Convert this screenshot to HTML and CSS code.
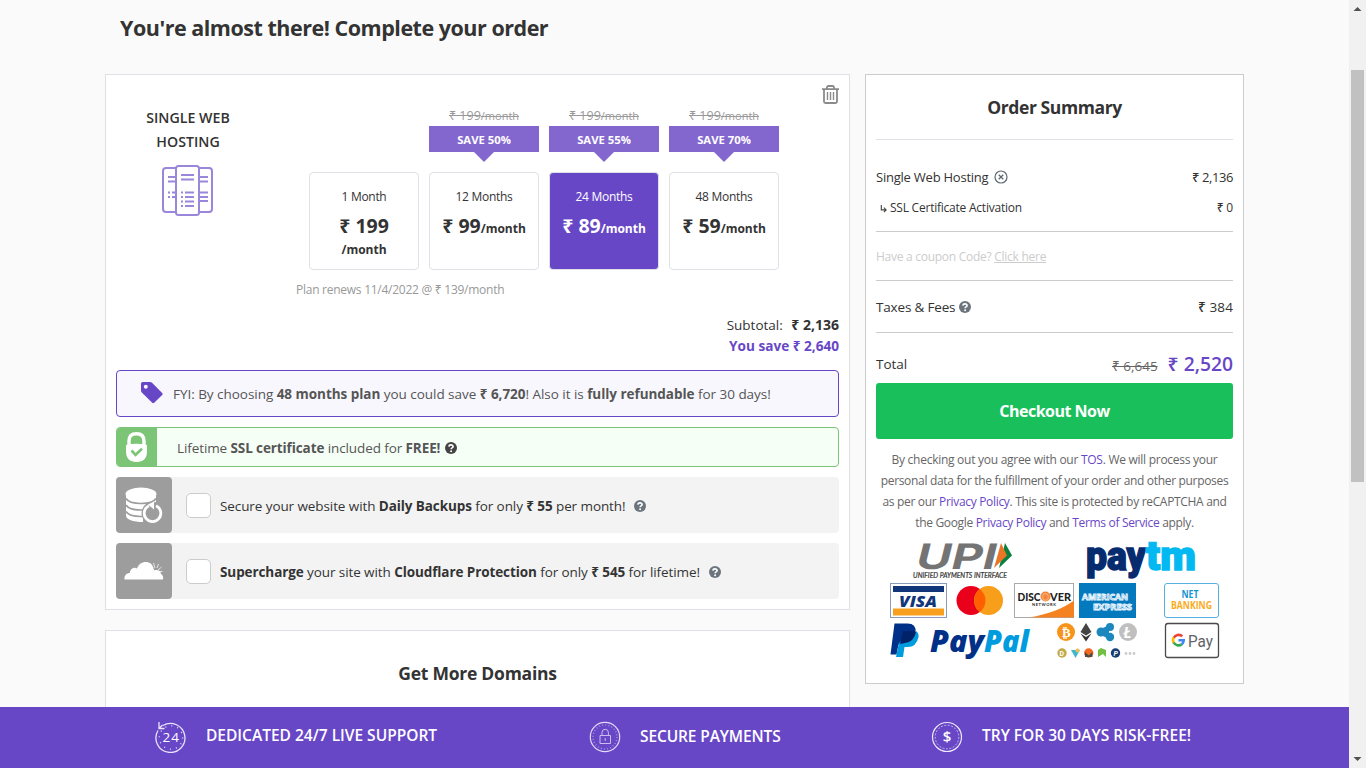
FILE: index.html
```html
<!DOCTYPE html>
<html lang="en">
<head>
<meta charset="utf-8">
<title>Complete your order</title>
<link rel="stylesheet" href="styles.css">
</head>
<body>
<svg class="defs" width="0" height="0">
  <symbol id="help" viewBox="0 0 12 12"><circle cx="6" cy="6" r="6" fill="currentColor"/><path d="M3.900 4.600C4.100 2.300 8.200 2.300 8.100 4.600 8 6 6.100 5.900 6.100 7.200" fill="none" stroke="#fff" stroke-width="1.600"/><circle cx="6.100" cy="9.200" r="1" fill="#fff"/></symbol>
</svg>
<div class="window">
  <div class="page">
    <main class="content">
      <h1 class="headline">You're almost there! Complete your order</h1>
      <div class="columns">
        <div class="left">
          <section class="card order">
            <svg class="trash" viewBox="0 0 17 19" fill="none" stroke="#8b8b8b" stroke-width="1.800"><path d="M0 4.200h17M5 4V2.500Q5 1 6.500 1h4Q12 1 12 2.500V4M2 4.500V16.500Q2 18 3.500 18h10Q15 18 15 16.500V4.500"/><path d="M5.500 7v8M8.500 7v8M11.500 7v8" stroke-width="1.400"/></svg>
            <div class="product">
              <div class="product-name"><div>SINGLE WEB</div><div>HOSTING</div>
                <svg class="servers" viewBox="0 0 51 51" fill="none" stroke="#9a86da" stroke-width="2"><path d="M14 3H4Q1 3 1 6v38q0 3 3 3h10M37 3h10q3 0 3 3v38q0 3-3 3H37"/><rect x="14" y="1" width="23" height="49" rx="2.500"/><path d="M6 12h7M6 16.500h7M38 12h8M38 16.500h8M19 10h13M19 14.500h13M10 27.500h3M10 32h3M6 27.500h2M6 32h2M38 27.500h8M38 32h8M38 36h8M19 27.500h2M23 27.500h9M19 32h2M23 32h9M19 36.500h2M23 36.500h9M19 41h2M23 41h9"/></svg>
              </div>
              <div class="plans">
                <div class="plan"><div class="was"></div><div class="gap"></div><div class="box"><div class="term">1 Month</div><div class="price">₹ 199<br><small>/month</small></div></div></div>
                <div class="plan"><div class="was"><s>₹ 199<small>/month</small></s></div><div class="save">SAVE 50%</div><div class="box"><div class="term">12 Months</div><div class="price">₹ 99<small>/month</small></div></div></div>
                <div class="plan"><div class="was"><s>₹ 199<small>/month</small></s></div><div class="save">SAVE 55%</div><div class="box on"><div class="term">24 Months</div><div class="price">₹ 89<small>/month</small></div></div></div>
                <div class="plan"><div class="was"><s>₹ 199<small>/month</small></s></div><div class="save">SAVE 70%</div><div class="box"><div class="term">48 Months</div><div class="price">₹ 59<small>/month</small></div></div></div>
              </div>
            </div>
            <div class="renews">Plan renews 11/4/2022 @ ₹ 139/month</div>
            <div class="subtotal"><span>Subtotal:</span> <b>₹ 2,136</b></div>
            <div class="yousave">You save ₹ 2,640</div>
            <div class="note fyi"><svg class="tag" viewBox="0 0 22 22"><path d="M0 1.500Q0 0 1.500 0H9q1.200 0 2 .8L21.200 11q.9 1 0 2l-8 7.800q-1 .9-2 0L.8 10.600Q0 9.800 0 8.600z" fill="#6847c7"/><circle cx="4.800" cy="4.800" r="2" fill="#f8f7fe"/></svg><span>FYI: By choosing <b>48 months plan</b> you could save <b>₹ 6,720</b>! Also it is <b>fully refundable</b> for 30 days!</span></div>
            <div class="note ssl"><div class="ssl-icon"><svg width="21" height="31" viewBox="0 0 21 31"><path d="M3 15V9Q3 1.700 10.500 1.700T18 9v6" fill="none" stroke="#fff" stroke-width="3.400"/><path d="M0 13q10.500-2.500 21 0v6q0 11-10.500 11T0 19z" fill="#fff"/><path d="m5.500 18.500 4 4.300 6.500-6" fill="none" stroke="#7cc576" stroke-width="2.600"/></svg></div><span>Lifetime <b>SSL certificate</b> included for <b>FREE!</b></span><svg class="help dark"><use href="#help"/></svg></div>
            <div class="addon"><div class="addon-icon"><svg width="38" height="36" viewBox="0 0 38 36"><path d="M1 7.500v21c0 4 7 6.500 17 6.500V23l13-8V7.500z" fill="#fff"/><path d="M1 11.500q3 5 15 5t15-5M1 18q3 5 15 5h4M1 24.500q3 5 15 5h4" fill="none" stroke="#9d9d9d" stroke-width="1.700"/><ellipse cx="16" cy="7" rx="15.500" ry="6.500" fill="#fff"/><circle cx="27.500" cy="26" r="11" fill="#9d9d9d"/><path d="M24 18.700a8.300 8.300 0 1 0 7 0" fill="none" stroke="#fff" stroke-width="2.800"/><path d="m23 17.500 6-3v8z" fill="#fff"/></svg></div><i class="check"></i><span>Secure your website with <b>Daily Backups</b> for only <b>₹ 55</b> per month!</span><svg class="help slate"><use href="#help"/></svg></div>
            <div class="addon"><div class="addon-icon"><svg width="40" height="20" viewBox="0 0 40 20"><path d="M31 7 29.500 2M33 7l1.500-4M34 9l3.500-3M35 10.500h3.500" stroke="#e6e6e6" stroke-width="1"/><path d="M.5 18.500C0 14 3 12 6 12c0-4 4-6.500 7-4.500C15 2 20 0 24.500 1.500c3.500 1 5 4 5.500 8 4-1.500 7 .5 7 3.500 2 1 2.500 3 2 5.500z" fill="#fff"/></svg></div><i class="check"></i><span><b>Supercharge</b> your site with <b>Cloudflare Protection</b> for only <b>₹ 545</b> for lifetime!</span><svg class="help slate"><use href="#help"/></svg></div>
          </section>
          <section class="card domains"><h2>Get More Domains</h2></section>
        </div>
        <aside class="card summary">
          <h2>Order Summary</h2>
          <div class="row item"><span>Single Web Hosting</span><svg class="remove" viewBox="0 0 14 14" fill="none" stroke="#5d6873"><circle cx="7" cy="7" r="6" stroke-width="1.200"/><path d="m4.700 4.700 4.600 4.600m0-4.600L4.700 9.300" stroke-width="1.300"/></svg><span class="amount">₹ 2,136</span></div>
          <div class="row sub"><svg class="hook" viewBox="0 0 8 9" fill="none" stroke="#444" stroke-width="1.300"><path d="M1.500 0v5.500H6M4.500 3 7 5.500 4.500 8"/></svg><span>SSL Certificate Activation</span><span class="amount">₹ 0</span></div>
          <div class="row coupon"><span>Have a coupon Code? <u>Click here</u></span></div>
          <div class="row taxes"><span>Taxes &amp; Fees</span><svg class="help slate"><use href="#help"/></svg><span class="amount">₹ 384</span></div>
          <div class="row total"><span>Total</span><s>₹ 6,645</s><strong>₹ 2,520</strong></div>
          <div class="checkout">Checkout Now</div>
          <p class="legal"><span class="loose">By checking out you agree with our <a>TOS</a>. We will process your</span><br>personal data for the fulfillment of your order and other purposes<br>as per our <a>Privacy Policy</a>. This site is protected by reCAPTCHA and<br>the Google <a>Privacy Policy</a> and <a>Terms of Service</a> apply.</p>
          <svg class="pay" viewBox="876 540 357 122">
            <text transform="translate(914 569) skewX(-14)" font-family="Inter" font-weight="700" font-size="35" fill="#747474" textLength="80" lengthAdjust="spacingAndGlyphs">UPI</text><text x="913" y="577.500" font-family="Lato" font-weight="400" font-style="italic" font-size="7.200" fill="#333" stroke="#333" stroke-width=".2" textLength="94" lengthAdjust="spacingAndGlyphs">UNIFIED PAYMENTS INTERFACE</text>
            <path d="m1005 543 7 12.500-13 12.500z" fill="#098041"/><path d="m1001 543 6 12.500-13 12.500z" fill="#e97626"/>
            <g transform="translate(0 570) scale(1 .93)" font-family="Roboto" font-weight="900" font-size="43" stroke-width="1.500"><text x="1086" fill="#062b6f" stroke="#062b6f" textLength="60" lengthAdjust="spacingAndGlyphs">pay</text><text x="1146" fill="#04b9f1" stroke="#04b9f1" textLength="50" lengthAdjust="spacingAndGlyphs">tm</text></g>
            <rect x="890.500" y="583.500" width="56" height="34" fill="#fff" stroke="#8a9cba"/><path fill="#113679" d="M893 586h51v6h-51z"/><path fill="#f8a01e" d="M893 608.500h51v7h-51z"/><text x="899" y="606.500" font-family="Open Sans" font-style="italic" font-weight="800" font-size="16.500" fill="#113679" textLength="38" lengthAdjust="spacingAndGlyphs">VISA</text>
            <circle cx="971" cy="600.500" r="14.500" fill="#eb001b"/><circle cx="988.500" cy="600.500" r="14.500" fill="#f79e1b"/><path d="M979.800 589a14.500 14.500 0 0 1 0 23 14.500 14.500 0 0 1 0-23" fill="#ff5f00"/>
            <rect x="1014.500" y="583.500" width="59" height="34" fill="#fff" stroke="#aaa"/><path d="M1029 617.500q29-5 45-17v17z" fill="#f58220"/><circle cx="1045.500" cy="596.500" r="5" fill="#f4863a"/><g font-family="Lato" font-weight="900" fill="#222"><text x="1017.500" y="600.500" font-size="11.500" textLength="23" lengthAdjust="spacingAndGlyphs">DISC</text><text x="1041.500" y="600.500" font-size="11.500" fill="#f7a468" textLength="8" lengthAdjust="spacingAndGlyphs">O</text><text x="1050" y="600.500" font-size="11.500" textLength="21" lengthAdjust="spacingAndGlyphs">VER</text><text x="1032" y="605.500" font-size="4" font-weight="700" textLength="24">NETWORK</text></g>
            <path fill="#0479be" d="M1079 583h57v35h-57z"/><g font-family="Open Sans" font-weight="700" font-size="9.500" fill="#0479be" stroke="#e6f4ff" stroke-width="1"><text x="1082" y="599.500" textLength="46" lengthAdjust="spacingAndGlyphs">AMERICAN</text><text x="1093" y="609.500" textLength="39" lengthAdjust="spacingAndGlyphs">EXPRESS</text></g>
            <rect x="1164.500" y="583.500" width="54" height="34" rx="2.500" fill="#fff" stroke="#56b0e0"/><g font-family="Open Sans" font-weight="700" font-size="10"><text x="1181.500" y="598" fill="#1695d3" textLength="17" lengthAdjust="spacingAndGlyphs">NET</text><text x="1171" y="608.800" fill="#faab1c" textLength="41" lengthAdjust="spacingAndGlyphs">BANKING</text></g>
            <path d="M894.500 623.500h13q9 0 8 9-2 12-12 12h-5l-2 10h-6z" fill="#003087"/><path d="M916 631q3 2 2.500 6-2 10-11 10h-3l-1.500 10h-7l1-5 2-9q1-2 4-2 11 1 13-10" fill="#009cde"/><path d="M903 631h9q3 0 4 1-2 10-11 11l-5 1z" fill="#012169"/>
            <g font-family="Open Sans" font-style="italic" font-weight="800" font-size="29.500"><text x="930" y="652" fill="#003087" textLength="54" lengthAdjust="spacingAndGlyphs">Pay</text><text x="984" y="652" fill="#009cde" textLength="45" lengthAdjust="spacingAndGlyphs">Pal</text></g>
            <circle cx="1066" cy="632" r="9" fill="#f7931a"/><text x="1062" y="636.500" font-family="Roboto" font-weight="900" font-size="13" fill="#fff">₿</text>
            <path d="m1086 623 5.500 9-5.500 3.500-5.500-3.500z" fill="#444"/><path d="m1080.500 633.500 5.500 3.500 5.500-3.500-5.500 8z" fill="#333"/>
            <g fill="#1b87bd"><circle cx="1101" cy="632" r="4.500"/><circle cx="1110" cy="627" r="4"/><circle cx="1110" cy="637" r="4.200"/><path d="m1101 629 8-4v14l-8-4z"/></g>
            <circle cx="1128" cy="632" r="9" fill="#bfbfbf"/><text x="1123.500" y="637.500" font-family="Lato" font-style="italic" font-weight="900" font-size="15" fill="#fff">Ł</text>
            <circle cx="1062" cy="653" r="4.700" fill="#c3a949"/><text x="1059.500" y="655.500" font-family="Roboto" font-weight="700" font-size="7" fill="#fff">D</text><path d="M1071 650h9l-4.500 8z" fill="#3fb6d0"/><circle cx="1077.500" cy="650.500" r="2" fill="#f0bd4c"/><circle cx="1088.700" cy="653" r="4.700" fill="#f26722"/><path d="M1085 657v-5l3.700 3.500 3.700-3.500v5z" fill="#4c4c4c"/><path d="m1098 650 3-2 5 2v7l-3-3-5 3z" fill="#72bf44"/><circle cx="1115.500" cy="653" r="4.700" fill="#153e75"/><text x="1113.500" y="655.500" font-family="Roboto" font-style="italic" font-weight="700" font-size="7" fill="#fff">P</text><g fill="#ccc"><circle cx="1126" cy="653.500" r="1.400"/><circle cx="1130" cy="653.500" r="1.400"/><circle cx="1134" cy="653.500" r="1.400"/></g>
            <rect x="1165.500" y="623.500" width="53" height="34" rx="2.500" fill="#fff" stroke="#4a4a4a" stroke-width="1.300"/><g fill="none" stroke-width="2.600"><path d="M1182.300 636.300a5.500 5.500 0 0 0-8.600 1.700" stroke="#ea4335"/><path d="M1173.700 637.500a5.500 5.500 0 0 0 0 5.500" stroke="#fbbc05"/><path d="M1173.700 642.500a5.500 5.500 0 0 0 8 1.900" stroke="#34a853"/><path d="M1178.500 640.300h5.200q0 2.700-2 4.100" stroke="#4285f4"/></g><text x="1188" y="646.500" font-family="Roboto" font-size="17" fill="#5f6368" textLength="25" lengthAdjust="spacingAndGlyphs">Pay</text>
          </svg>
        </aside>
      </div>
    </main>
    <footer class="bar">
      <div class="perk p1"><svg viewBox="0 0 32 32" fill="none" stroke="#e9e3fa" stroke-width="1.300"><path d="M8 4.500A14.500 14.500 0 1 1 3 9.500M4 1v6.500h5.500M4 7.500l3.500-3.500"/><circle cx="16" cy="16.500" r="11.700" stroke-dasharray="1 5.120"/><text x="7.500" y="21" font-family="Open Sans" font-weight="400" font-size="13.500" fill="#fff" stroke="none" textLength="16.500">24</text></svg><span>DEDICATED 24/7 LIVE SUPPORT</span></div>
      <div class="perk p2"><svg viewBox="0 0 32 32" fill="none" stroke="#cabdec"><circle cx="16" cy="16" r="14.700" stroke="#e2daf6" stroke-width="1.200"/><circle cx="16" cy="16" r="12" stroke-dasharray="1 2.140" stroke-width="1.500" opacity=".6"/><path d="M11 14.500h10.500v8H11zM13 14v-2.500a3.200 3.200 0 0 1 6.400 0V14M16.200 17v3"/></svg><span>SECURE PAYMENTS</span></div>
      <div class="perk p3"><svg viewBox="0 0 32 32" fill="none" stroke="#eee9fb"><circle cx="16" cy="16" r="14.500" stroke-width="1.200"/><circle cx="16" cy="16" r="11.800" stroke-dasharray="2 1.500" opacity=".65"/><text x="11.700" y="21.200" font-family="Open Sans" font-weight="600" font-size="15" fill="#fff" stroke="none">$</text></svg><span>TRY FOR 30 DAYS RISK-FREE!</span></div>
    </footer>
  </div>
  <div class="scrollbar"><svg viewBox="0 0 17 17"><path d="m4.500 11 4-4 4 4z" fill="#505050"/></svg><i></i><svg viewBox="0 0 17 17"><path d="m4.500 6 4 4 4-4z" fill="#505050"/></svg></div>
</div>
</body>
</html>
```
FILE: styles.css
```css
* { box-sizing: border-box; }
body { margin: 0; font-family: "Open Sans", "Noto Sans", sans-serif; font-size: 13.5px; color: #333; }
h1, h2, p { margin: 0; }
b, strong { font-weight: 700; }
svg { flex: none; display: block; }
.defs { position: absolute; }
.window { display: flex; width: 1366px; height: 768px; overflow: hidden; background: #fafafa; }
.page { display: flex; flex-direction: column; width: 1349px; height: 768px; white-space: nowrap; }
.content { height: 707px; overflow: hidden; padding: 0 105px; }
.headline { height: 74px; padding: 12px 0 0 15px; font-size: 21.5px; line-height: 32px; font-weight: 700; letter-spacing: -.48px; }
.columns { display: flex; align-items: flex-start; gap: 15px; }
.left { width: 745px; display: flex; flex-direction: column; gap: 20px; }
.card { background: #fff; border: 1px solid #dee2e6; }

.order { position: relative; height: 536px; padding: 0 10px; display: flex; flex-direction: column; }
.trash { position: absolute; top: 10px; right: 10px; width: 17px; height: 19px; }
.product { display: flex; height: 195px; }
.product-name { width: 144px; padding-top: 31px; text-align: center; font-size: 14.2px; line-height: 24px; font-weight: 600; }
.servers { width: 51px; height: 51px; margin: 11px auto 0 46px; }
.plans { display: flex; gap: 10px; margin-left: 49px; padding-top: 31px; }
.plan { width: 110px; text-align: center; }
.was { height: 20px; line-height: 20px; font-size: 12.5px; color: #999; }
.was small { font-size: 11px; }
.gap { height: 26px; }
.save { position: relative; height: 26px; line-height: 27px; background: #8466cf; color: #fff; font-size: 11.3px; font-weight: 700; }
.save::after { content: ""; position: absolute; top: 26px; left: 45px; border: 10px solid transparent; border-top-color: #8466cf; border-bottom: 0; }
.box { height: 98px; margin-top: 20px; padding-top: 12px; border: 1px solid #dee2e6; border-radius: 4px; }
.box.on { background: #6847c7; color: #fff; }
.term { line-height: 24px; font-size: 12px; letter-spacing: -.3px; }
.price { padding-top: 6px; font-size: 19.5px; line-height: 21px; font-weight: 700; }
.price small { font-size: 12px; }
.renews { margin: 10px 0 0 180px; height: 20px; line-height: 20px; font-size: 12px; letter-spacing: -.26px; color: #999; }
.subtotal { margin-top: 14px; height: 21px; line-height: 21px; text-align: right; }
.subtotal span { margin-right: 5px; }
.subtotal b { font-size: 14px; }
.yousave { height: 21px; line-height: 21px; text-align: right; font-size: 13.6px; font-weight: 700; color: #6847c7; }
.note, .addon { display: flex; align-items: center; border-radius: 4px; flex: none; color: #333; }
.note { color: #555; }
.fyi { margin-top: 14px; height: 47px; border: 1px solid #6847c7; background: #f8f7fe; padding-left: 24px; letter-spacing: -.035px; }
.tag { width: 22px; height: 22px; margin: -1px 10px 0 0; }
.ssl { margin-top: 10px; height: 40px; border: 1px solid #7cc576; background: #f6fff6; overflow: hidden; letter-spacing: -.1px; }
.ssl span, .addon span { padding-top: 2px; }
.ssl-icon { width: 40px; height: 38px; background: #7cc576; margin-right: 20px; padding: 4px 0 0 9px; }
.help { width: 12px; height: 12px; margin-left: 5px; }
.ssl .help, .addon .help { margin-top: 2px; }
.dark { color: #444; }
.slate { color: #6c757d; }
.addon { margin-top: 10px; height: 56px; background: #f3f3f3; letter-spacing: -.09px; }
.addon .help { margin-left: 9px; }
.addon-icon { width: 56px; height: 56px; background: #9d9d9d; border-radius: 4px; display: flex; align-items: center; justify-content: center; }
.check { width: 25px; height: 25px; margin: 0 9px 0 14px; border: 1px solid #ccc; border-radius: 5px; background: #fff; }
.domains { height: 100px; padding-top: 30px; text-align: center; }
h2 { font-size: 17.5px; line-height: 24px; font-weight: 700; letter-spacing: -.25px; }

.summary { width: 379px; height: 610px; padding: 0 10px; border-color: #ccc; }
.summary h2 { height: 65px; padding-top: 20px; text-align: center; border-bottom: 1px solid #dee2e6; letter-spacing: -.4px; }
.row { display: flex; align-items: center; }
.amount { margin-left: auto; font-weight: 500; }
.item { padding-top: 22px; height: 52px; font-size: 13px; letter-spacing: -.23px; }
.item .amount { letter-spacing: -.4px; }
.remove { width: 14px; height: 14px; margin-left: 6px; }
.sub { height: 40px; padding-bottom: 8px; border-bottom: 1px solid #ccc; font-size: 12px; letter-spacing: -.23px; }
.hook { width: 7px; height: 8px; margin: 2px 3px 0 4px; }
.coupon { height: 49px; border-bottom: 1px solid #ccc; font-size: 12px; letter-spacing: -.27px; color: #ccc; }
.taxes { height: 52px; border-bottom: 1px solid #ccc; letter-spacing: -.17px; }
.taxes .help { margin-left: 4px; }
.taxes .amount { letter-spacing: .1px; }
.total { height: 50px; padding-top: 11px; }
.total s { margin-left: auto; color: #666; padding-top: 4px; }
.total strong { margin-left: 10px; font-size: 19.3px; font-weight: 600; color: #6847c7; }
.checkout { height: 56px; border-radius: 3px; background: #19bf5a; color: #fff; font-size: 16px; font-weight: 700; line-height: 56px; text-align: center; letter-spacing: -.5px; }
.legal { height: 101px; padding-top: 10px; text-align: center; font-size: 12px; line-height: 21px; letter-spacing: -.32px; color: #666; }
.legal .loose { letter-spacing: -.27px; }
.legal a { color: #6847c7; }
.pay { width: 357px; height: 122px; }

.bar { height: 61px; background: #6847c7; color: #fff; display: flex; font-size: 15.5px; font-weight: 600; padding-left: 155px; }
.perk { display: flex; align-items: center; height: 59px; }
.perk svg { width: 32px; height: 32px; }
.perk span { margin-left: 19px; padding-bottom: 4px; }
.p1 { width: 434px; }
.p2 { width: 342px; letter-spacing: -.12px; }
.perk.p2 span { padding-bottom: 2px; }

.scrollbar { width: 17px; height: 768px; background: #f1f1f1; display: flex; flex-direction: column; justify-content: space-between; align-items: center; }
.scrollbar i { width: 13px; height: 412px; margin: 53px 0 auto; background: #c1c1c1; }
.scrollbar svg { width: 17px; height: 17px; }
```
